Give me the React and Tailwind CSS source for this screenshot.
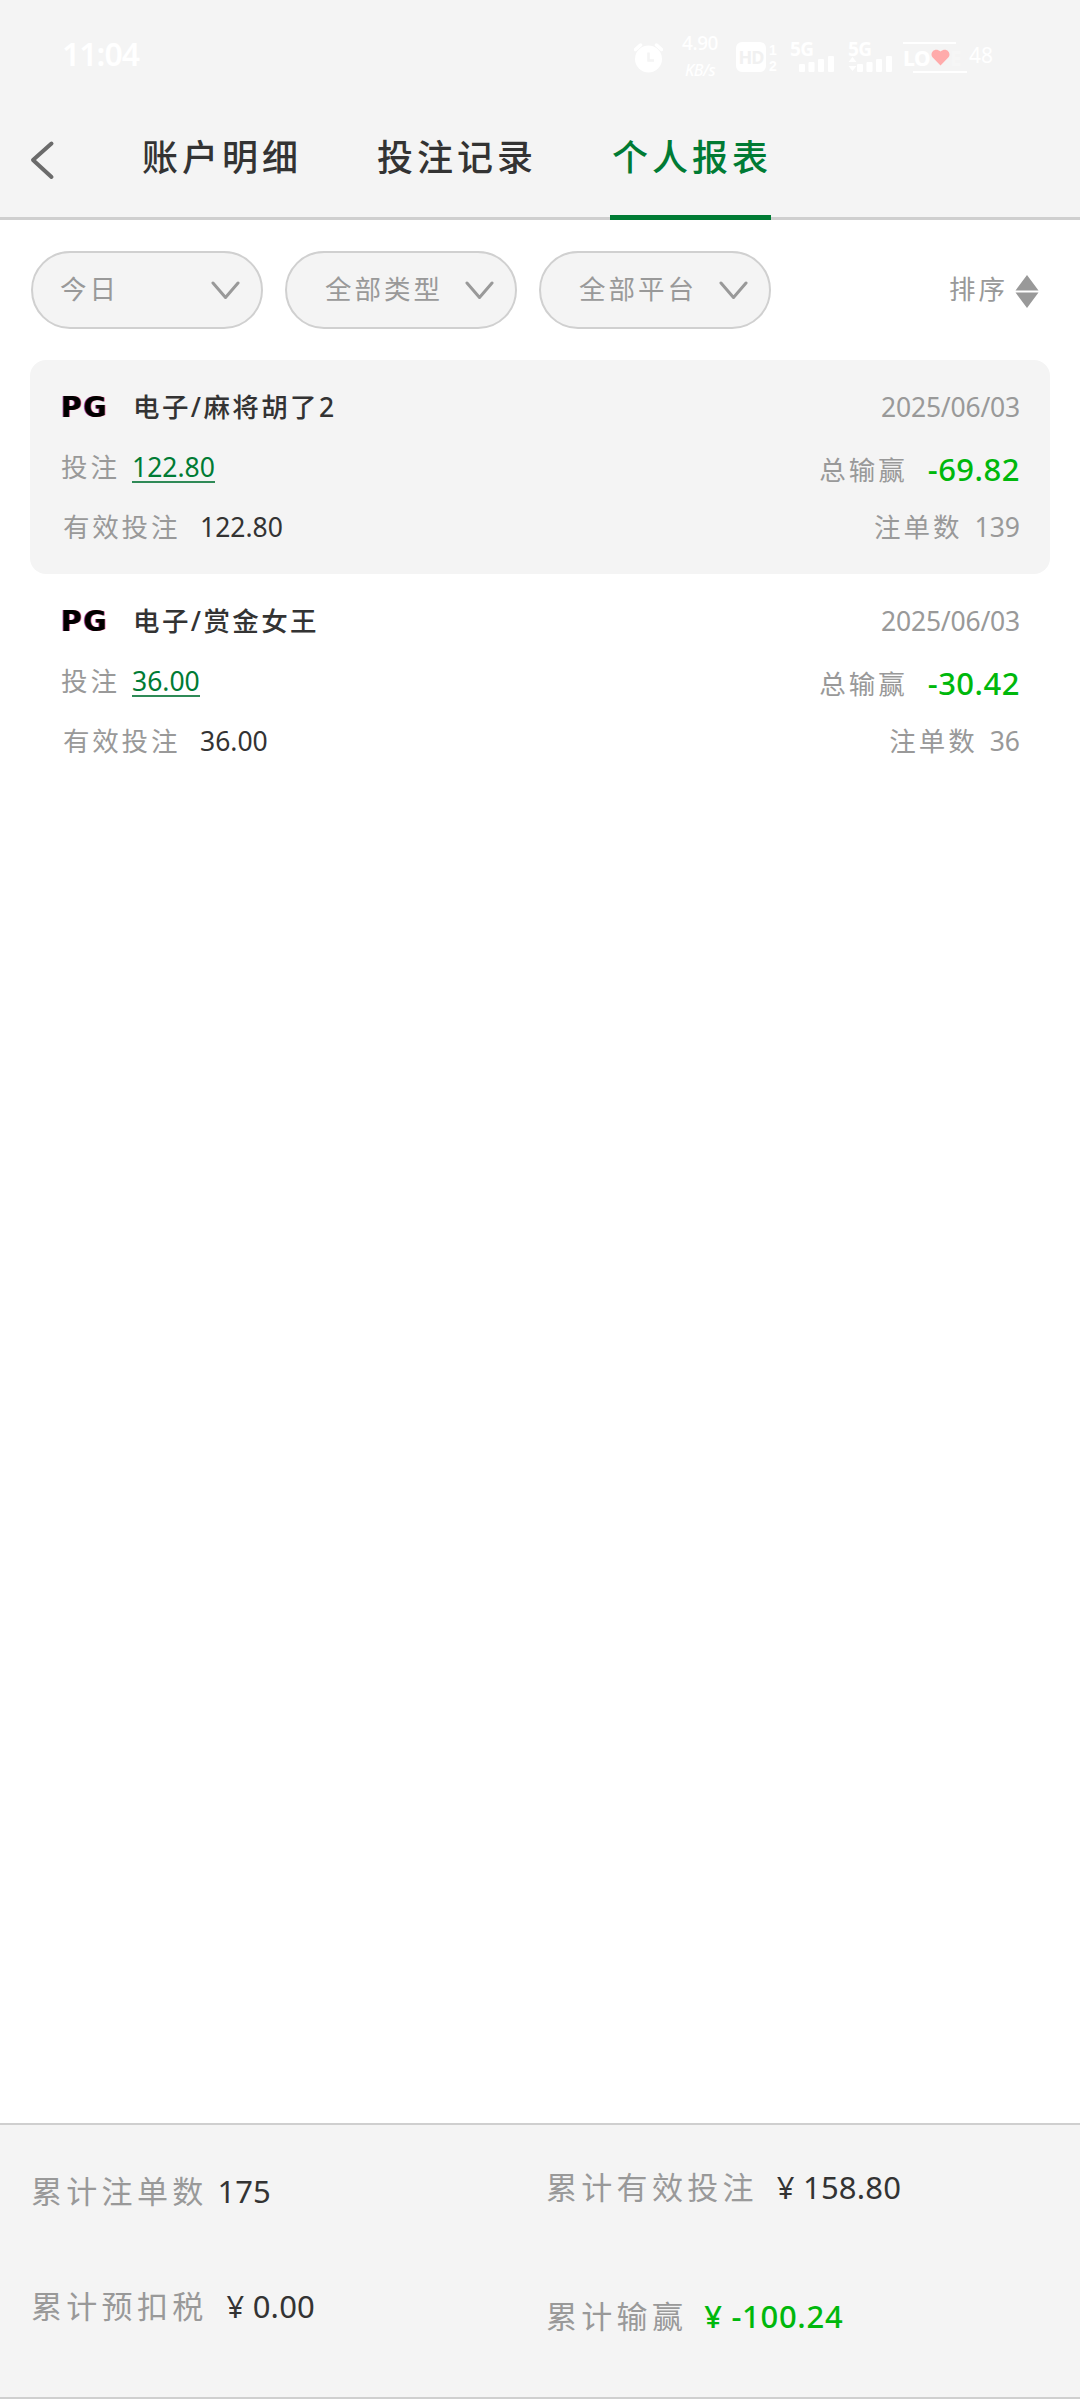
import { useState } from 'react';
import clsx from 'clsx';

const tabs = ['账户明细', '投注记录', '个人报表'];

const filters = [
  { label: '今日', align: 'pl-[27px]' },
  { label: '全部类型', align: 'pl-[38px]' },
  { label: '全部平台', align: 'pl-[38px]' }
];

const records = [
  { id: 1, name: '电子/麻将胡了2', date: '2025/06/03', bet: '122.80', valid: '122.80', profit: '-69.82', count: 139 },
  { id: 2, name: '电子/赏金女王', date: '2025/06/03', bet: '36.00', valid: '36.00', profit: '-30.42', count: 36 }
];

const SignalBars = ({ className }) => (
  <svg className={className} width="35" height="16" viewBox="0 0 35 16" fill="currentColor">
    <rect x="0" y="8" width="6" height="8" rx="1" />
    <rect x="9.5" y="6" width="6" height="10" rx="1" />
    <rect x="19" y="3" width="6" height="13" rx="1" />
    <rect x="29" y="0" width="6" height="16" rx="1" />
  </svg>
);

const StatusBar = () => (
  <div className="flex h-[100px] items-start pl-[62px] pt-[42px] text-white">
    <span className="w-[572px] text-[32px] font-semibold leading-[24px] tracking-[-1px]">11:04</span>

    <svg className="mt-[1px]" width="29" height="30" viewBox="0 0 29 30" fill="none">
      <circle cx="14.5" cy="16" r="13.5" fill="currentColor" />
      <path d="M1.5 6.5 6.5 2M27.5 6.5 22.5 2" stroke="currentColor" strokeWidth="3.5" strokeLinecap="round" />
      <path d="M14.5 9.500V17.500H20" stroke="#f4f4f4" strokeWidth="2.500" />
    </svg>

    <div className="-mt-[8px] ml-[19px] flex w-[36px] flex-col items-center">
      <span className="text-[19px] font-medium leading-[18px] tracking-[-0.5px]">4.90</span>
      <span className="mt-[9px] text-[16px] font-medium italic leading-[18px] tracking-[-0.5px]">KB/s</span>
    </div>

    <span className="ml-[18px] flex h-[30px] w-[30px] items-center justify-center rounded-[6px] bg-white text-[18px] font-bold tracking-[-1px] text-[#f1f1f1]">HD</span>
    <div className="ml-[3px] flex w-[10px] flex-col font-['Liberation_Sans',sans-serif] text-[14px] font-bold leading-[16px]">
      <span>1</span>
      <span>2</span>
    </div>

    <div className="ml-[11px] flex w-[47px] flex-col">
      <span className="text-[19px] font-bold leading-[14px] tracking-[-0.5px]">5G</span>
      <SignalBars className="ml-[9px]" />
    </div>
    <div className="ml-[11px] flex w-[44px] flex-col">
      <span className="text-[19px] font-bold leading-[14px] tracking-[-0.5px]">5G</span>
      <div className="flex">
        <svg width="9" height="16" viewBox="0 0 9 16" fill="currentColor">
          <path d="M0.500 6 4.500 1 8.500 6zM0.500 10h8L4.500 15z" />
        </svg>
        <SignalBars />
      </div>
    </div>

    <div className="ml-[11px] flex h-[31px] w-[64px] flex-col justify-between">
      <div className="h-[2px] w-[53px] bg-white" />
      <div className="flex h-[20px] items-center">
        <span className="w-[28px] text-[21px] font-extrabold leading-[20px] tracking-[-0.5px]">LO</span>
        <svg className="shrink-0" width="19" height="17" viewBox="0 0 19 17" fill="#ffabab">
          <path d="M9.500 16.500 1.500 8.300C-1.800 4.300 3.700-2.500 9.500 2.600 15.300-2.500 20.800 4.300 17.500 8.300z" />
        </svg>
        <span className="text-[21px] font-extrabold leading-[20px] text-[#f6f6f6]">E</span>
      </div>
      <div className="ml-[10px] h-[2px] w-[54px] bg-white" />
    </div>
    <span className="mt-[4px] ml-[2px] text-[21px] leading-[18px]">48</span>
  </div>
);

const Record = ({ record, shaded }) => (
  <div className={clsx('h-[214px] rounded-[16px] pl-[31px] pr-[30px] pt-[18px] text-[26.5px]', shaded && 'bg-[#f4f4f4]')}>
    <div className="flex h-[60px] items-center justify-between">
      <div className="flex items-center">
        <span className="w-[72px] font-['DejaVu_Sans'] text-[28px] font-bold leading-none tracking-[2px] text-black [text-shadow:1px_0_0_#ff5a3a,-1px_0_0_#6a4be0]">PG</span>
        <span className="font-medium tracking-[2.4px] text-[#333]">{record.name}</span>
      </div>
      <span className="tracking-[-0.2px] text-[#999]">{record.date}</span>
    </div>

    <div className="flex h-[60px] items-center justify-between">
      <div className="flex items-center">
        <span className="w-[71px] tracking-[3px] text-[#999]">投注</span>
        <span className="border-b-2 border-[#2f8a57] leading-[28px] text-[#007b34]">{record.bet}</span>
      </div>
      <div className="flex items-center pt-[3px]">
        <span className="mr-[20px] pt-[3px] tracking-[3px] text-[#999]">总输赢</span>
        <span className="text-[31px] font-medium tracking-[0.5px] text-[#00b80c]">{record.profit}</span>
      </div>
    </div>

    <div className="flex h-[60px] items-center justify-between">
      <div className="flex items-center pl-[2px]">
        <span className="w-[137px] tracking-[2.8px] text-[#999]">有效投注</span>
        <span className="text-[#333]">{record.valid}</span>
      </div>
      <div className="flex items-center text-[#999]">
        <span className="mr-[12px] tracking-[3px]">注单数</span>
        <span>{record.count}</span>
      </div>
    </div>
  </div>
);

const Total = ({ label, value, className, valueClass }) => (
  <div className={clsx('flex h-[44px] items-center text-[31px]', className)}>
    <span className="tracking-[4.3px] text-[#999]">{label}</span>
    <span className={valueClass}>{value}</span>
  </div>
);

const App = () => {
  const [activeTab, setActiveTab] = useState(2);

  return (
    <div className="flex h-[2400px] w-[1080px] flex-col overflow-hidden bg-white font-['Noto_Sans','Noto_Sans_CJK_SC',sans-serif]">
      <header className="h-[220px] border-b-[3px] border-[#cfcfcf] bg-[#f4f4f4]">
        <StatusBar />
        <nav className="flex h-[120px] pl-[30px]">
          <button className="w-[110px]">
            <svg width="25" height="40" viewBox="0 0 25 40" fill="none" stroke="#6b6b6b" strokeWidth="4" strokeLinecap="round" strokeLinejoin="round">
              <path d="M21.500 3.500 3 20 21.500 37" />
            </svg>
          </button>
          <div className="flex gap-[74px]">
            {tabs.map((tab, i) => (
              <button
                key={tab}
                onClick={() => setActiveTab(i)}
                className={clsx(
                  'h-[120px] w-[161px] whitespace-nowrap border-b-[5px] pl-[2px] text-left text-[36px] font-medium tracking-[4px]',
                  activeTab === i ? 'border-[#007b34] text-[#007b34]' : 'border-transparent text-[#333]'
                )}
              >
                {tab}
              </button>
            ))}
          </div>
        </nav>
      </header>

      <div className="flex items-center pl-[31px] pr-[41px] pt-[31px]">
        <div className="flex gap-[22px]">
          {filters.map((f) => (
            <button key={f.label} className="flex h-[78px] w-[232px] items-center justify-between rounded-full border-2 border-[#d0d0d0] bg-[#f4f4f4] pr-[21px] text-[26.5px] text-[#999]">
              <span className={clsx('tracking-[3px]', f.align)}>{f.label}</span>
              <svg width="29" height="19" viewBox="0 0 29 19" fill="none" stroke="#999" strokeWidth="3" strokeLinecap="round" strokeLinejoin="round">
                <path d="M2 2 14.500 16.500 27 2" />
              </svg>
            </button>
          ))}
        </div>
        <button className="ml-auto flex items-center gap-[7px] text-[26.5px] text-[#999]">
          <span className="tracking-[3px]">排序</span>
          <svg className="mt-[2px]" width="24" height="33" viewBox="0 0 24 33" fill="#999">
            <path d="M12 0 23.500 15.500H0.500zM0.500 17.500h23L12 33z" />
          </svg>
        </button>
      </div>

      <main className="flex-1 px-[30px] pt-[31px]">
        {records.map((r, i) => (
          <Record key={r.id} record={r} shaded={i % 2 === 0} />
        ))}
      </main>

      <footer className="mb-[1px] grid h-[276px] grid-cols-[515px_1fr] grid-rows-[112px_1fr] border-y-[2px] border-[#cfcfcf] bg-[#f4f4f4] pl-[31px]">
        <Total className="mt-[44px]" label="累计注单数" value="175" valueClass="ml-[10px] text-[#333]" />
        <Total className="mt-[40px]" label="累计有效投注" value="¥ 158.80" valueClass="ml-[19px] text-[#333] tracking-[0.2px]" />
        <Total className="mt-[47px]" label="累计预扣税" value="¥ 0.00" valueClass="ml-[19px] text-[#333] tracking-[0.2px]" />
        <Total className="mt-[57px]" label="累计输赢" value="¥ -100.24" valueClass="ml-[17px] font-medium text-[#00b80c] tracking-[0.7px]" />
      </footer>
    </div>
  );
};

export default App;
